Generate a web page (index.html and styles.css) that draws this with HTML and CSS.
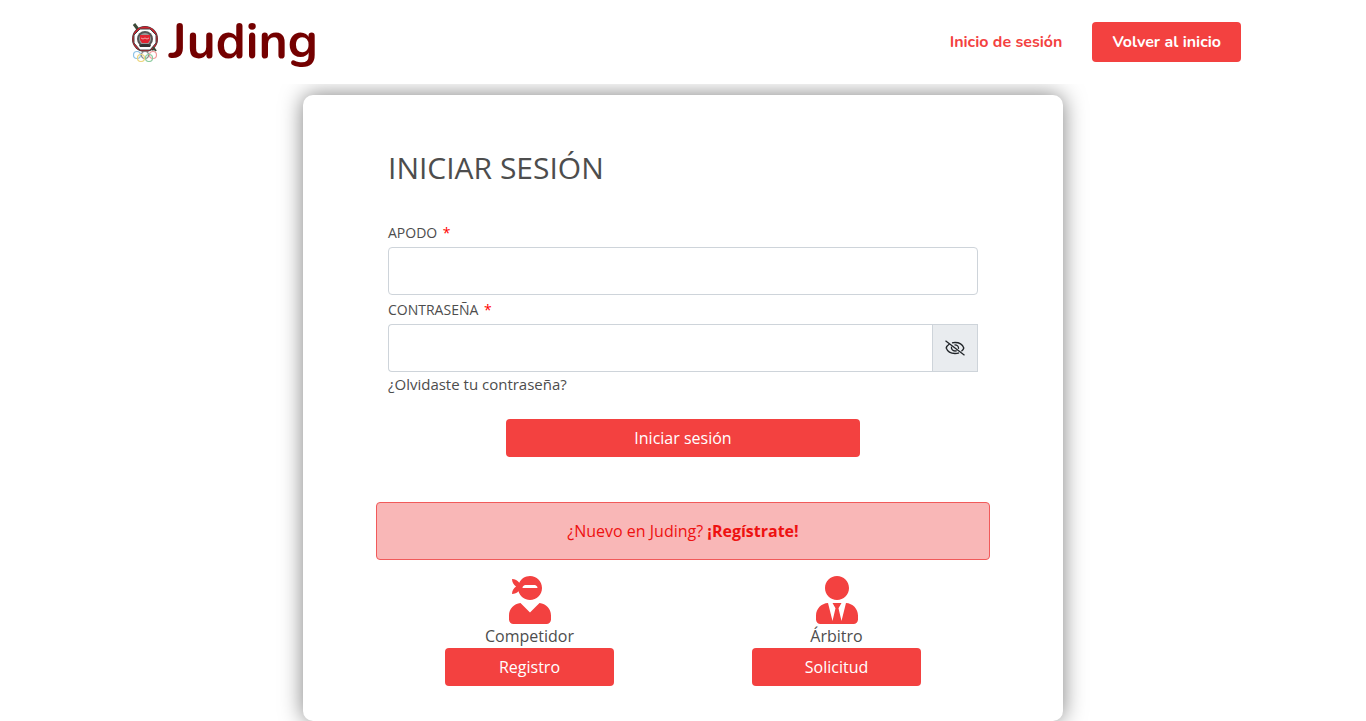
FILE: index.html
```html
<!DOCTYPE html>
<html lang="es">
<head>
<meta charset="utf-8">
<meta name="viewport" content="width=device-width, initial-scale=1">
<title>Juding - Iniciar sesión</title>
<link rel="stylesheet" href="styles.css">
</head>
<body>
<header class="header">
  <div class="container">
    <a class="logo" href="#">
      <svg class="logo-mark" viewBox="0 0 30 40" aria-hidden="true">
        <path d="M4 2l3 4 17 22" stroke="#3b4a38" stroke-width="3" fill="none"/>
        <circle cx="15" cy="17" r="13" fill="#333"/>
        <circle cx="15" cy="17" r="12.500" fill="#d3222f"/>
        <path d="M10 7h10l6 6v8l-6 7H10l-6-7v-8z" fill="#fff" stroke="#444" stroke-width="1"/>
        <path d="M23 25l3 4" stroke="#3b4a38" stroke-width="2"/>
        <circle cx="15" cy="17" r="8" fill="#555"/>
        <circle cx="15" cy="17" r="6" fill="#999"/>
        <path d="M10 13h10v5l-2 3h-6l-2-3z" fill="#e02431"/>
        <path d="M11 16l2 1 2-1 2 1 2-1" stroke="#f4a0a5" stroke-width="1" fill="none"/>
        <path d="M9 23l3-1h6l3 1-1 2H10z" fill="#333"/>
        <g fill="none" stroke-width="1.2">
          <circle cx="7" cy="33" r="3.500" stroke="#8fc3e6"/>
          <circle cx="15" cy="33" r="3.500" stroke="#888"/>
          <circle cx="23" cy="33" r="3.500" stroke="#f29a9a"/>
          <circle cx="11" cy="36" r="3.500" stroke="#ecd67f"/>
          <circle cx="19" cy="36" r="3.500" stroke="#8ccca0"/>
        </g>
      </svg>
      <span class="logo-text">Juding</span>
    </a>
    <nav class="nav">
      <a class="nav-link" href="#">Inicio de sesión</a>
      <a class="nav-button" href="#">Volver al inicio</a>
    </nav>
  </div>
</header>
<main class="main">
  <section class="card">
    <form class="form">
      <h1 class="title">INICIAR SESIÓN</h1>
      <label class="label" for="apodo">APODO <span class="required">*</span></label>
      <input class="input" id="apodo" type="text">
      <label class="label" for="clave">CONTRASEÑA <span class="required">*</span></label>
      <div class="input-group">
        <input class="input" id="clave" type="password">
        <button class="toggle" type="button" aria-label="Mostrar contraseña">
          <svg viewBox="0 0 20 16" aria-hidden="true">
            <g fill="none" stroke="#212529" stroke-width="1.3">
              <path d="M4.500 4C2.500 5.200 1.500 6.500 1.200 8c1.300 3.500 5 5.500 8.800 5.500 1.500 0 2.800-.2 4-.7M7 2.900C8 2.600 9 2.500 10 2.500c4 0 7.500 2 8.800 5.500-.3 1.300-1.200 2.500-2.400 3.300"/>
              <path d="M6.500 6.700c-.5 2.300 1 4.300 3.500 4.300.6 0 1.200-.1 1.700-.4M9.500 4.800c2.500-.2 4.400 1.700 4 4"/>
              <path d="M.5.800l19 14.500"/>
            </g>
          </svg>
        </button>
      </div>
      <a class="forgot" href="#">¿Olvidaste tu contraseña?</a>
      <button class="button" type="submit">Iniciar sesión</button>
    </form>
    <p class="alert">¿Nuevo en Juding? <strong>¡Regístrate!</strong></p>
    <div class="roles">
      <div class="role">
        <svg class="role-icon" viewBox="0 0 448 512" aria-hidden="true"><path d="M325.400 289.200L224 390.600 122.600 289.200C54 295.300 0 352.200 0 422.400V464c0 26.500 21.500 48 48 48h352c26.500 0 48-21.500 48-48v-41.600c0-70.200-54-127.100-122.600-133.200zM32 192c27.300 0 51.800-11.500 69.200-29.700 15.100 53.900 64 93.700 122.800 93.700 70.700 0 128-57.300 128-128S294.700 0 224 0c-50.400 0-93.600 29.400-114.500 71.800C92.100 47.800 64 32 32 32c0 33.400 17.100 62.800 43.100 80-26 17.200-43.100 46.600-43.100 80zm144-96h96c17.700 0 32 14.300 32 32H144c0-17.700 14.300-32 32-32z"/></svg>
        <span>Competidor</span>
        <button class="button" type="button">Registro</button>
      </div>
      <div class="role">
        <svg class="role-icon" viewBox="0 0 448 512" aria-hidden="true"><path d="M224 256c70.700 0 128-57.300 128-128S294.700 0 224 0 96 57.300 96 128s57.300 128 128 128zm95.800 32.600L272 480l-32-136 32-56h-96l32 56-32 136-47.800-191.400C56.900 292 0 350.300 0 422.400V464c0 26.500 21.500 48 48 48h352c26.500 0 48-21.500 48-48v-41.600c0-72.100-56.900-130.400-128.200-133.800z"/></svg>
        <span>Árbitro</span>
        <button class="button" type="button">Solicitud</button>
      </div>
    </div>
  </section>
</main>
</body>
</html>
```

FILE: styles.css
```css
* {
  box-sizing: border-box;
}

body {
  margin: 0;
  background: #fff;
  color: #4d4d4d;
  font: 16px/24px "Open Sans", "Noto Sans", sans-serif;
}

a {
  color: inherit;
  text-decoration: none;
}

.header {
  position: relative;
  z-index: 1;
  background: #fff;
}

.container {
  display: flex;
  align-items: center;
  justify-content: space-between;
  max-width: 1140px;
  height: 84px;
  margin: 0 auto;
  padding: 0 12px 0 17px;
}

.logo {
  display: flex;
  align-items: center;
  gap: 9px;
}

.logo-mark {
  width: 30px;
  height: 40px;
}

.logo-text {
  color: #740000;
  font: 700 50px/60px Nunito, Inter, sans-serif;
}

.nav {
  display: flex;
  align-items: center;
  gap: 30px;
  color: #f34140;
  font: 700 16px/24px Nunito, Inter, sans-serif;
}

.nav-button {
  padding: 8px 20px;
  border-radius: 4px;
  background: #f34140;
  color: #fff;
}

.main {
  padding: 11px 16px 0;
}

.card {
  max-width: 760px;
  margin: 0 auto;
  padding: 55px 73px 35px;
  border-radius: 10px;
  background: #fff;
  box-shadow: 0 0 22px rgba(0, 0, 0, 0.5);
}

.form {
  display: flex;
  flex-direction: column;
  padding: 0 12px;
}

.title {
  margin: 0 0 33px;
  font-size: 30px;
  font-weight: 400;
  line-height: 36px;
}

.label {
  padding: 4px 0;
  font-size: 14px;
  line-height: 20px;
}

.required {
  margin-left: 2px;
  color: #f00;
}

.input {
  width: 100%;
  height: 48px;
  padding: 0 12px;
  border: 1px solid #ced4da;
  border-radius: 4px;
  background: #fff;
  font: inherit;
}

.label + .input {
  margin-bottom: 1px;
}

.input-group {
  display: flex;
}

.input-group .input {
  flex: 1;
  border-right: 0;
  border-radius: 4px 0 0 4px;
}

.toggle {
  display: grid;
  place-items: center;
  width: 46px;
  padding: 0;
  border: 1px solid #ced4da;
  background: #e9ecef;
}

.toggle svg {
  width: 20px;
  height: 16px;
}

.forgot {
  align-self: flex-start;
  font-size: 15px;
}

.button {
  width: 60%;
  height: 38px;
  padding: 0;
  border: 0;
  border-radius: 4px;
  background: #f34140;
  color: #fff;
  font: inherit;
}

.form .button {
  align-self: center;
  margin-top: 23px;
}

.alert {
  margin: 45px 0 16px;
  padding: 16px;
  border: 1px solid #f15a5a;
  border-radius: 4px;
  background: #f9b7b7;
  color: #ee1111;
  text-align: center;
}

.roles {
  display: grid;
  grid-template-columns: 1fr 1fr;
}

.role {
  display: flex;
  flex-direction: column;
  align-items: center;
  padding: 0 12px;
}

.role-icon {
  width: 42px;
  height: 48px;
  fill: #f34140;
}
```
